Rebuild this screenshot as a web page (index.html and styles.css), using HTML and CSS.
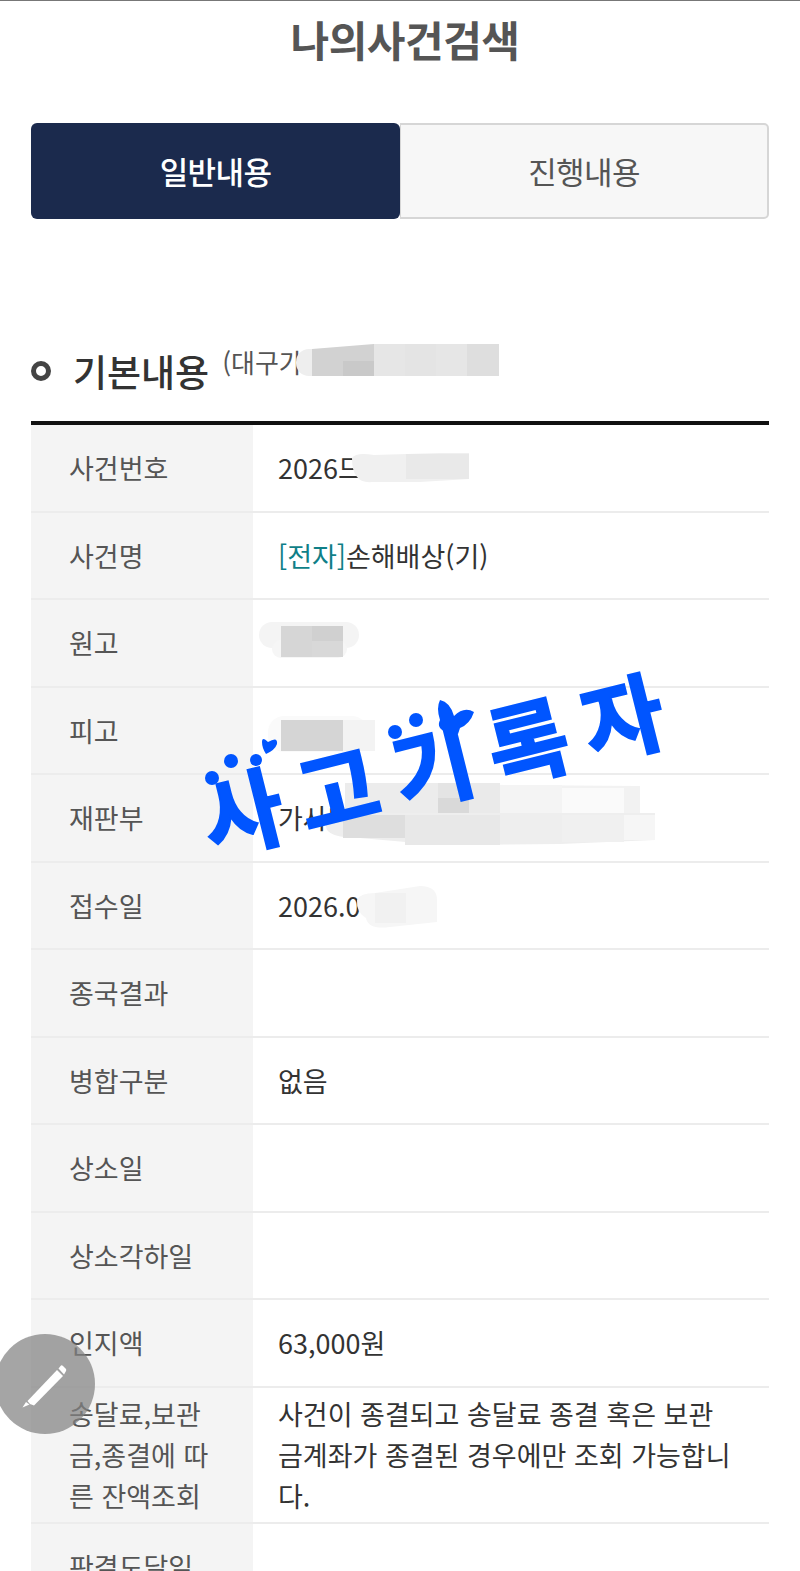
FILE: index.html
```html
<!DOCTYPE html>
<html lang="ko">
<head>
<meta charset="utf-8">
<title>나의사건검색</title>
<link rel="stylesheet" href="styles.css">
</head>
<body>
<main class="page">
  <h1 class="title">나의사건검색</h1>
  <nav class="tabs">
    <a class="tab tab-on">일반내용</a>
    <a class="tab">진행내용</a>
  </nav>
  <h2 class="section"><span class="bullet"></span><span class="section-name">기본내용</span><span class="section-sub">(대구가</span></h2>
  <table class="info">
    <tr><th>사건번호</th><td>2026드</td></tr>
    <tr><th>사건명</th><td><span class="tag">[전자]</span>손해배상(기)</td></tr>
    <tr><th>원고</th><td></td></tr>
    <tr><th>피고</th><td></td></tr>
    <tr><th>재판부</th><td>가사단</td></tr>
    <tr><th>접수일</th><td>2026.0</td></tr>
    <tr><th>종국결과</th><td></td></tr>
    <tr><th>병합구분</th><td>없음</td></tr>
    <tr><th>상소일</th><td></td></tr>
    <tr><th>상소각하일</th><td></td></tr>
    <tr><th>인지액</th><td>63,000원</td></tr>
    <tr class="tall"><th>송달료,보관금,종결에 따른 잔액조회</th><td>사건이 종결되고 송달료 종결 혹은 보관금계좌가 종결된 경우에만 조회 가능합니다.</td></tr>
    <tr><th>판결도달일</th><td></td></tr>
  </table>
</main>

<svg class="mosaic" viewBox="0 0 800 1571" aria-hidden="true">
  <!-- heading -->
  <rect x="296" y="349" width="40" height="27" rx="13" fill="#eeeeee"/>
  <path d="M312 349 L374 344 V376 H312Z" fill="#d2d2d2"/>
  <rect x="343" y="361" width="31" height="15" fill="#c9c9c9"/>
  <rect x="374" y="344" width="31" height="32" fill="#e6e6e6"/>
  <rect x="405" y="344" width="31" height="32" fill="#e4e4e4"/>
  <rect x="436" y="344" width="31" height="32" fill="#e6e6e6"/>
  <rect x="467" y="344" width="32" height="32" fill="#dedede"/>
  <!-- case number -->
  <path d="M352 458 Q356 452 374 455 L440 453 H469 V479 L420 482 H372 Q352 484 352 458Z" fill="#f0f0f0"/>
  <rect x="406" y="454" width="63" height="25" fill="#e9e9e9"/>
  <!-- plaintiff -->
  <rect x="259" y="622" width="100" height="26" rx="13" fill="#f4f4f4"/>
  <rect x="272" y="640" width="75" height="18" rx="9" fill="#f6f6f6"/>
  <rect x="281" y="626" width="31" height="31" fill="#d6d6d6"/>
  <rect x="312" y="626" width="31" height="15" fill="#d0d0d0"/>
  <rect x="312" y="641" width="31" height="16" fill="#d8d8d8"/>
  <!-- defendant -->
  <rect x="268" y="716" width="100" height="36" rx="16" fill="#fafafa"/>
  <rect x="281" y="720" width="62" height="31" fill="#d5d5d5"/>
  <rect x="343" y="720" width="32" height="31" fill="#f3f3f3"/>
  <!-- court -->
  <path d="M345 800 Q350 786 400 784 L640 786 V815 H345Z" fill="#f2f2f2"/>
  <rect x="345" y="783" width="93" height="30" fill="#ececec"/>
  <rect x="438" y="783" width="31" height="15" fill="#e4e4e4"/>
  <rect x="438" y="798" width="31" height="16" fill="#d9d9d9"/>
  <rect x="469" y="783" width="31" height="30" fill="#eaeaea"/>
  <rect x="500" y="785" width="62" height="28" fill="#f4f4f4"/>
  <rect x="562" y="788" width="62" height="25" fill="#fafafa"/>
  <path d="M340 813 H655 V840 L560 844 L440 845 L360 838 Q326 838 326 826 Q326 813 340 813Z" fill="#eeeeee"/>
  <rect x="343" y="815" width="62" height="23" fill="#dedede"/>
  <rect x="405" y="815" width="95" height="30" fill="#e8e8e8"/>
  <rect x="562" y="815" width="62" height="27" fill="#f0f0f0"/>
  <rect x="624" y="815" width="31" height="25" fill="#f6f6f6"/>
  <!-- date -->
  <path d="M357 900 Q360 893 375 893 L420 886 Q437 886 437 900 V922 L390 927 Q368 930 366 918 Q356 912 357 900Z" fill="#f6f6f6"/>
  <rect x="375" y="893" width="31" height="30" fill="#f1f1f1"/>
</svg>

<div class="stamp">
  <span class="stamp-text">사고기록자</span>
  <svg class="stamp-deco" viewBox="0 0 490 190" aria-hidden="true">
    <circle cx="22" cy="108" r="7" fill="#0055ff"/>
    <circle cx="41" cy="91" r="7" fill="#0055ff"/>
    <circle cx="66" cy="90" r="6" fill="#0055ff"/>
    <path d="M72 72 Q72 66 78 72 Q88 66 87 74 Q85 80 76 84 Q72 78 72 72Z" fill="#0055ff"/>
    <circle cx="205" cy="62" r="7" fill="#0055ff"/>
    <circle cx="226" cy="50" r="7" fill="#0055ff"/>
    <path d="M250 30 Q260 32 264 46 Q274 36 284 42 Q280 54 270 58 L268 64 L256 62 Q246 58 250 50 Q246 38 250 30Z" fill="#0055ff"/>
  </svg>
</div>

<button class="fab" aria-label="쓰기">
  <svg class="fab-icon" viewBox="0 0 48 48" aria-hidden="true">
    <path d="M1.5 47.500 L5 42 L8.500 44.500Z" fill="#fff"/>
    <path d="M6.500 41 L36 10 L42 16 L13 45.500 L9 44Z" fill="#fff"/>
    <path d="M37.500 8.500 L40 5.500 Q41 5 42 6 L45 9 Q45.500 10 45 11 L43 14.500Z" fill="#fff"/>
  </svg>
</button>
</body>
</html>
```
FILE: styles.css
```css
* { box-sizing: border-box; }

html, body {
  margin: 0;
  padding: 0;
  height: 1571px;
  overflow: hidden;
  background: #fff;
}

body {
  position: relative;
  width: 800px;
  border-top: 1px solid #777;
  font-family: "Noto Sans CJK KR", "Noto Sans", sans-serif;
  color: #333;
}

.page {
  padding: 0 31px;
}

.title {
  margin: 9px 0 0;
  padding-left: 10px;
  height: 60px;
  font-size: 42px;
  line-height: 58px;
  font-weight: 700;
  letter-spacing: -0.5px;
  text-align: center;
  color: #555;
}

.tabs {
  display: flex;
  margin-top: 53px;
  height: 96px;
}

.tab {
  flex: 1;
  display: flex;
  align-items: center;
  justify-content: center;
  padding-bottom: 2px;
  border: 2px solid #d6d6d6;
  border-left: 1px solid #d6d6d6;
  border-radius: 0 5px 5px 0;
  background: #f7f7f7;
  font-size: 31px;
  letter-spacing: -0.6px;
  color: #555;
}

.tab-on {
  flex: 0 0 369px;
  border: 0;
  border-radius: 6px;
  background: #1b2a4d;
  color: #fff;
  font-weight: 500;
}

.section {
  display: flex;
  align-items: flex-start;
  margin: 121px 0 0;
  height: 81px;
  font-weight: 500;
}

.bullet {
  width: 20px;
  height: 20px;
  margin-top: 21px;
  border: 5px solid #444;
  border-radius: 50%;
  background: #fff;
}

.section-name {
  margin-left: 22px;
  font-size: 37px;
  line-height: 62px;
  color: #333;
}

.section-sub {
  margin-left: 13px;
  font-size: 26px;
  line-height: 44px;
  font-weight: 400;
  color: #555;
}

.info {
  width: 100%;
  table-layout: fixed;
  border-collapse: separate;
  border-spacing: 0;
  border-top: 4px solid #111;
}

.info tr {
  height: 87.5px;
}

.info th,
.info td {
  border-bottom: 2px solid #ececec;
  font-size: 27px;
  line-height: 41px;
  font-weight: 400;
  text-align: left;
  vertical-align: middle;
}

.info th {
  width: 222px;
  padding: 5px 38px;
  background: #f4f4f4;
  color: #555;
}

.info td {
  padding: 5px 36px 5px 25px;
  color: #333;
}

.info .tall {
  height: 136px;
}

.tag {
  color: #0f7f88;
}

.mosaic {
  position: absolute;
  left: 0;
  top: -1px;
  width: 800px;
  height: 1571px;
  pointer-events: none;
}

.stamp {
  position: absolute;
  left: 190px;
  top: 669px;
  width: 490px;
  height: 190px;
}

.stamp-text {
  position: absolute;
  left: 5px;
  top: 29px;
  font-size: 88px;
  line-height: 120px;
  font-weight: 700;
  letter-spacing: 17px;
  white-space: nowrap;
  color: #0055ff;
  -webkit-text-stroke: 2px #0055ff;
  transform: rotate(-14deg);
}

.stamp-deco {
  position: absolute;
  inset: 0;
}

.fab {
  position: absolute;
  left: -5px;
  top: 1333px;
  width: 100px;
  height: 100px;
  padding: 0;
  border: 0;
  border-radius: 50%;
  display: flex;
  align-items: center;
  justify-content: center;
  background: rgba(130, 130, 130, 0.72);
}

.fab-icon {
  width: 48px;
  height: 48px;
}
```
